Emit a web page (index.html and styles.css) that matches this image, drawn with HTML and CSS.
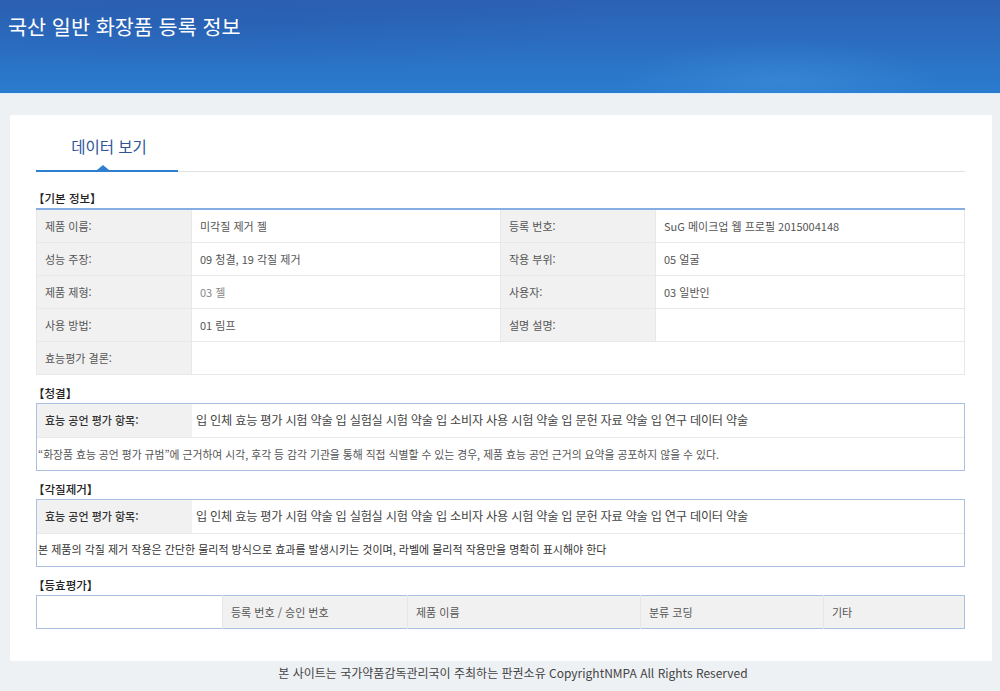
FILE: index.html
```html
<!DOCTYPE html>
<html lang="ko">
<head>
    <meta charset="UTF-8">
    <meta name="viewport" content="width=device-width, initial-scale=1.0">
    <title>국산 일반 화장품 등록 정보</title>
    <link rel="stylesheet" href="styles.css">
</head>
<body>

    <div class="header">
        <h1>국산 일반 화장품 등록 정보</h1>
    </div>

    <div class="panel">
        <div class="tabs">
            <div class="tab active">데이터 보기</div>
        </div>

        <p class="section-title">【기본 정보】</p>
        <table class="info">
            <colgroup>
                <col style="width: 155px">
                <col style="width: 309px">
                <col style="width: 155px">
                <col>
            </colgroup>
            <tr>
                <th>제품 이름:</th>
                <td>미각질 제거 젤</td>
                <th>등록 번호:</th>
                <td>SuG 메이크업 웹 프로필 2015004148</td>
            </tr>
            <tr>
                <th>성능 주장:</th>
                <td>09 청결, 19 각질 제거</td>
                <th>작용 부위:</th>
                <td>05 얼굴</td>
            </tr>
            <tr>
                <th>제품 제형:</th>
                <td class="light">03 젤</td>
                <th>사용자:</th>
                <td>03 일반인</td>
            </tr>
            <tr>
                <th>사용 방법:</th>
                <td>01 림프</td>
                <th>설명 설명:</th>
                <td class="blank"></td>
            </tr>
            <tr>
                <th>효능평가 결론:</th>
                <td colspan="3"></td>
            </tr>
        </table>

        <p class="section-title">【청결】</p>
        <div class="claim-box">
            <div class="claim-row">
                <div class="claim-label">효능 공언 평가 항목:</div>
                <div class="claim-value">입 인체 효능 평가 시험 약술 입 실험실 시험 약술 입 소비자 사용 시험 약술 입 문헌 자료 약술 입 연구 데이터 약술</div>
            </div>
            <div class="claim-note">“화장품 효능 공언 평가 규범”에 근거하여 시각, 후각 등 감각 기관을 통해 직접 식별할 수 있는 경우, 제품 효능 공언 근거의 요약을 공포하지 않을 수 있다.</div>
        </div>

        <p class="section-title">【각질제거】</p>
        <div class="claim-box">
            <div class="claim-row">
                <div class="claim-label">효능 공언 평가 항목:</div>
                <div class="claim-value">입 인체 효능 평가 시험 약술 입 실험실 시험 약술 입 소비자 사용 시험 약술 입 문헌 자료 약술 입 연구 데이터 약술</div>
            </div>
            <div class="claim-note dark">본 제품의 각질 제거 작용은 간단한 물리적 방식으로 효과를 발생시키는 것이며, 라벨에 물리적 작용만을 명확히 표시해야 한다</div>
        </div>

        <p class="section-title">【등효평가】</p>
        <table class="equal">
            <colgroup>
                <col style="width: 186px">
                <col style="width: 185px">
                <col style="width: 233px">
                <col style="width: 183px">
                <col>
            </colgroup>
            <tr>
                <td></td>
                <th>등록 번호 / 승인 번호</th>
                <th>제품 이름</th>
                <th>분류 코딩</th>
                <th>기타</th>
            </tr>
        </table>
    </div>

    <div class="footer">본 사이트는 국가약품감독관리국이 주최하는 판권소유 CopyrightNMPA All Rights Reserved</div>

</body>
</html>
```

FILE: styles.css
```css
* {
    margin: 0;
    padding: 0;
    box-sizing: border-box;
}

body {
    font-family: "Noto Sans CJK KR", "Noto Sans", sans-serif;
    background: #eef1f4;
    color: #555;
    width: 1000px;
    height: 691px;
    overflow: hidden;
}

.header {
    height: 94px;
    background:
        radial-gradient(ellipse 160px 40px at 780px 80px, rgba(80, 160, 230, 0.3), transparent),
        radial-gradient(ellipse 420px 50px at 200px 22px, rgba(30, 70, 150, 0.18), transparent),
        linear-gradient(to bottom, #2c61b4, #2a7ccf);
    border-bottom: 1px solid #d9edfb;
    padding: 11px 0 0 8px;
}

.header h1 {
    font-size: 20.7px;
    font-weight: 400;
    color: #fff;
}

.panel {
    background: #fff;
    margin: 21px 8px 0 10px;
    padding: 0 27px 33px 26px;
    height: 546px;
}

.tabs {
    height: 57px;
    border-bottom: 1px solid #e0e0e0;
    display: flex;
    align-items: flex-end;
}

.tab {
    width: 142px;
    height: 57px;
    padding: 20px 0 0 4px;
    text-align: center;
    font-size: 15.5px;
    color: #2f5597;
    position: relative;
    margin-bottom: -1px;
}

.tab.active {
    border-bottom: 2px solid #2f7fd0;
}

.tab.active::after {
    content: "";
    position: absolute;
    left: 61px;
    bottom: 0;
    border-left: 6px solid transparent;
    border-right: 6px solid transparent;
    border-bottom: 5px solid #2f7fd0;
}

.section-title {
    font-size: 11.5px;
    font-weight: 500;
    color: #222;
    height: 19px;
    line-height: 19px;
    margin-top: 9px;
    margin-left: -3px;
}

.tabs + .section-title {
    margin-top: 17px;
}

table {
    width: 100%;
    border-collapse: collapse;
    table-layout: fixed;
    font-size: 11px;
}

.info {
    border-top: 2px solid #86aee2;
}

.info th,
.info td {
    height: 33px;
    border: 1px solid #e8e8e8;
    text-align: left;
    font-weight: 400;
    padding: 0 8px;
    color: #555;
}

.info th {
    background: #f1f1f1;
}

.info td.light {
    color: #888;
}

.claim-box {
    border: 1px solid #a9c0e0;
}

.claim-row {
    display: flex;
    height: 34px;
    border-bottom: 1px solid #e8e8e8;
}

.claim-label {
    width: 155px;
    background: #f1f1f1;
    font-size: 11px;
    font-weight: 500;
    color: #333;
    padding-left: 8px;
    display: flex;
    align-items: center;
}

.claim-value {
    font-size: 12.2px;
    letter-spacing: -0.25px;
    color: #444;
    padding-left: 4px;
    display: flex;
    align-items: center;
}

.claim-note {
    height: 32px;
    font-size: 10.8px;
    color: #555;
    padding: 8px 0 0 1px;
}

.claim-note.dark {
    font-size: 11px;
    color: #333;
    padding-top: 7px;
}

.equal {
    border: 1px solid #a9c0e0;
}

.equal th,
.equal td {
    height: 33px;
    text-align: left;
    font-weight: 400;
    color: #555;
    padding: 0 8px;
}

.equal th {
    background: #f1f1f1;
    border-left: 1px solid #e6e6e6;
}

.footer {
    text-align: center;
    font-size: 12px;
    color: #444;
    padding-top: 3px;
    margin-left: 26px;
}
```
